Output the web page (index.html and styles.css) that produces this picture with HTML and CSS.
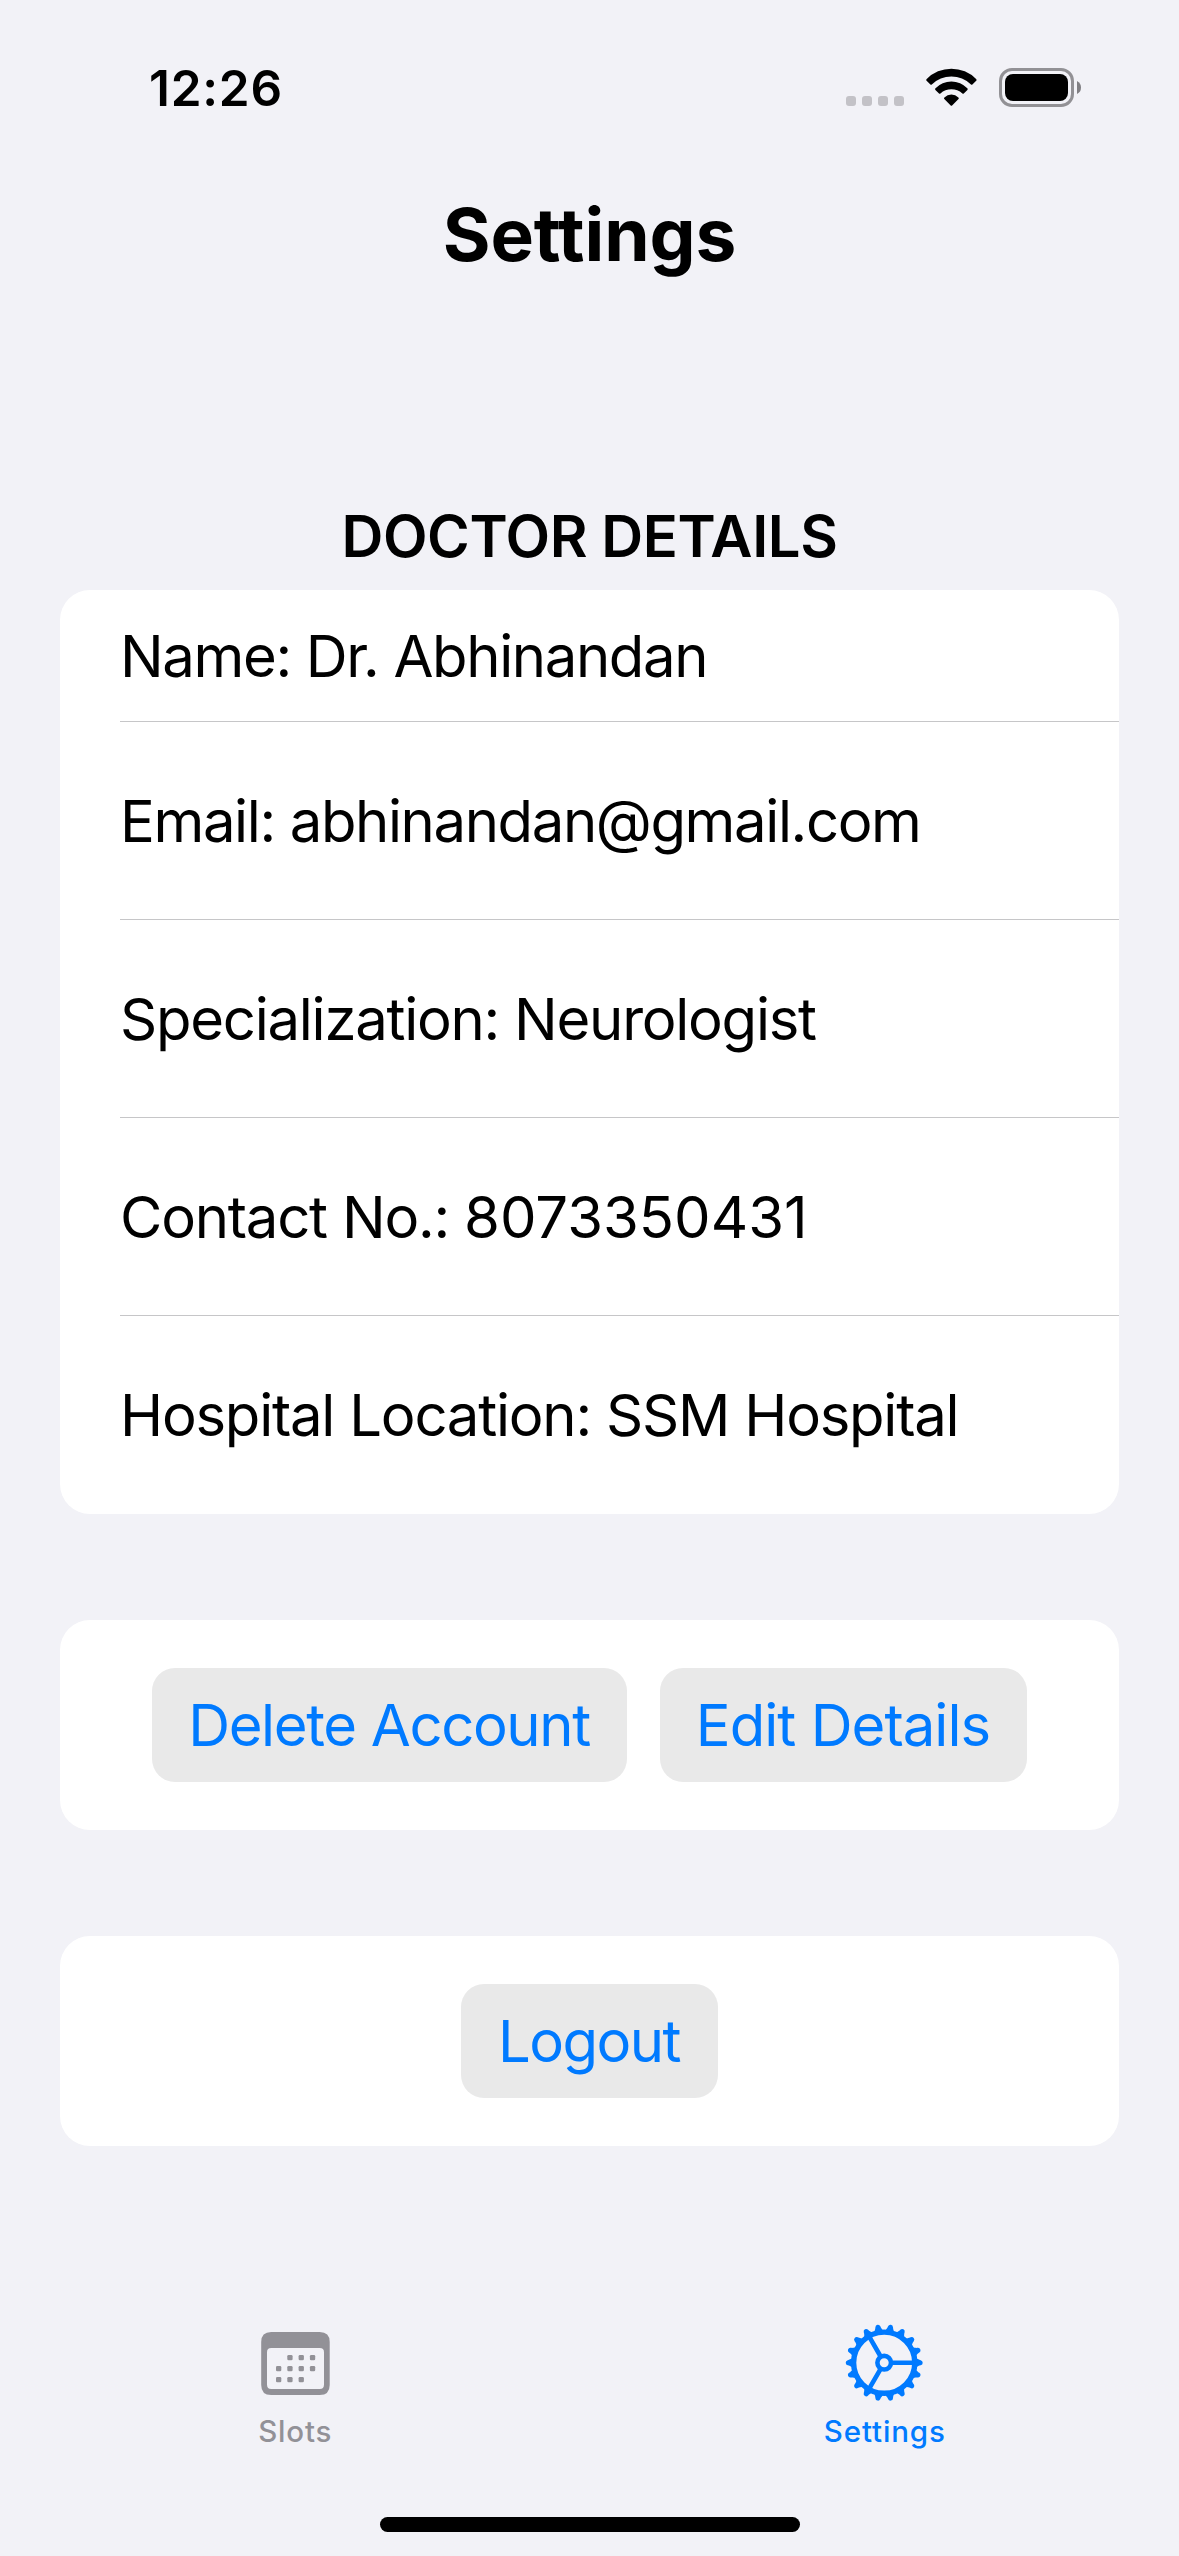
FILE: index.html
```html
<!DOCTYPE html>
<html lang="en">
<head>
<meta charset="utf-8">
<title>Settings</title>
<link rel="stylesheet" href="styles.css">
</head>
<body>
<div class="screen">
  <header class="status-bar">
    <span class="time">12:26</span>
    <div class="status-icons">
      <svg class="signal" width="58" height="40" viewBox="0 0 58 40" fill="#c3c2c7">
        <rect x="0" y="28" width="10" height="10" rx="3"/>
        <rect x="16" y="28" width="10" height="10" rx="3"/>
        <rect x="32" y="28" width="10" height="10" rx="3"/>
        <rect x="48" y="28" width="10" height="10" rx="3"/>
      </svg>
      <svg class="wifi" width="52" height="40" viewBox="0 0 52 40">
        <path d="M.7 11.1A34.4 34.4 0 0 1 50.1 11.1Q51 11.9 50.2 12.8L46.4 16.5Q45.7 17.1 45 16.5A28 28 0 0 0 5.8 16.5Q5.1 17.1 4.4 16.5L.6 12.8Q-.2 11.9 .7 11.1Z"/>
        <path d="M9.5 20.3A21.9 21.9 0 0 1 41.3 20.3Q42.2 21.1 41.4 22L37.8 25.4Q37.1 26 36.4 25.4A16.9 16.9 0 0 0 14.4 25.4Q13.7 26 13 25.4L9.4 22Q8.6 21.1 9.5 20.3Z"/>
        <path d="M18.4 29.4A10.2 10.2 0 0 1 32.4 29.4Q33.3 30.2 32.5 31L26.1 37.4Q25.4 38 24.7 37.4L18.3 31Q17.5 30.2 18.4 29.4Z"/>
      </svg>
      <svg class="battery" width="82" height="40" viewBox="0 0 82 40">
        <rect x="1.5" y="1.5" width="72" height="36" rx="11.5" fill="none" stroke="#929195" stroke-width="3"/>
        <rect x="6" y="6" width="63" height="27" rx="8"/>
        <path d="M78 13Q82 15 82 19.5T78 26Z" fill="#807f83"/>
      </svg>
    </div>
  </header>

  <h1 class="page-title">Settings</h1>

  <main class="content">
    <h2 class="section-title">DOCTOR DETAILS</h2>
    <ul class="card details">
      <li class="detail name">Name: Dr. Abhinandan</li>
      <li class="detail email">Email: abhinandan@gmail.com</li>
      <li class="detail specialization">Specialization: Neurologist</li>
      <li class="detail contact">Contact No.: <span class="digits">8073350431</span></li>
      <li class="detail location">Hospital Location: SSM Hospital</li>
    </ul>
    <div class="card actions">
      <button class="button delete">Delete Account</button>
      <button class="button edit">Edit Details</button>
    </div>
    <div class="card actions">
      <button class="button logout">Logout</button>
    </div>
  </main>

  <nav class="tab-bar">
    <a class="tab slots">
      <svg width="78" height="78" viewBox="0 0 78 78">
        <path fill="currentColor" fill-rule="evenodd" d="M15.200 8H63.700Q73.700 8 73.700 18V61Q73.700 71 63.700 71H15.200Q5.200 71 5.200 61V18Q5.200 8 15.200 8ZM15.200 24Q11 24 11 28.200V60.500Q11 65 15.200 65H63.800Q68 65 68 60.500V28.200Q68 24 63.800 24Z"/>
        <g fill="currentColor">
          <rect x="31.300" y="31" width="5.300" height="5.300" rx="1.300"/><rect x="42.600" y="31" width="5.300" height="5.300" rx="1.300"/><rect x="53.900" y="31" width="5.300" height="5.300" rx="1.300"/>
          <rect x="20" y="42" width="5.300" height="5.300" rx="1.300"/><rect x="31.300" y="42" width="5.300" height="5.300" rx="1.300"/><rect x="42.600" y="42" width="5.300" height="5.300" rx="1.300"/><rect x="53.900" y="42" width="5.300" height="5.300" rx="1.300"/>
          <rect x="20" y="53" width="5.300" height="5.300" rx="1.300"/><rect x="31.300" y="53" width="5.300" height="5.300" rx="1.300"/><rect x="42.600" y="53" width="5.300" height="5.300" rx="1.300"/>
        </g>
      </svg>
      <span class="tab-label">Slots</span>
    </a>
    <a class="tab settings active">
      <svg width="78" height="78" viewBox="-39.200 -38.700 78 78">
        <defs><path id="tooth" d="M31.500 -4.600C34 -3.600 34.500 -2.900 36.500 -2.500Q38.500 -2 38.500 0T36.500 2.500C34.500 2.900 34 3.600 31.500 4.600Z"/></defs>
        <g fill="currentColor">
          <use href="#tooth"/><use href="#tooth" transform="rotate(20)"/><use href="#tooth" transform="rotate(40)"/>
          <use href="#tooth" transform="rotate(60)"/><use href="#tooth" transform="rotate(80)"/><use href="#tooth" transform="rotate(100)"/>
          <use href="#tooth" transform="rotate(120)"/><use href="#tooth" transform="rotate(140)"/><use href="#tooth" transform="rotate(160)"/>
          <use href="#tooth" transform="rotate(180)"/><use href="#tooth" transform="rotate(200)"/><use href="#tooth" transform="rotate(220)"/>
          <use href="#tooth" transform="rotate(240)"/><use href="#tooth" transform="rotate(260)"/><use href="#tooth" transform="rotate(280)"/>
          <use href="#tooth" transform="rotate(300)"/><use href="#tooth" transform="rotate(320)"/><use href="#tooth" transform="rotate(340)"/>
        </g>
        <g fill="none" stroke="currentColor">
          <circle r="30.600" stroke-width="5.400"/>
          <circle r="6.800" stroke-width="4.600"/>
          <path stroke-width="4.600" d="M8 0H30M-4 -6.930L-15 -25.980M-4 6.930L-15 25.980"/>
        </g>
      </svg>
      <span class="tab-label">Settings</span>
    </a>
  </nav>
  <div class="home-indicator"></div>
</div>
</body>
</html>
```
FILE: styles.css
```css
* {
  box-sizing: border-box;
  margin: 0;
  padding: 0;
}

body {
  background: #f2f2f7;
  color: #000;
  font-family: Inter, "Liberation Sans", sans-serif;
}

svg {
  display: block;
}

.screen {
  display: flex;
  flex-direction: column;
  width: 1179px;
  height: 2556px;
}

/* Status bar */
.status-bar {
  display: flex;
  align-items: center;
  justify-content: space-between;
  height: 176px;
  padding: 0 98px 0 149px;
}

.time {
  font-size: 49.5px;
  font-weight: 600;
  line-height: 60px;
  letter-spacing: 0.75px;
}

.status-icons {
  display: flex;
  align-items: center;
}

.wifi {
  margin: 0 21px 0 22px;
}

/* Title */
.page-title {
  margin-top: 14px;
  font-size: 73px;
  font-weight: 700;
  line-height: 90px;
  letter-spacing: -0.1px;
  text-align: center;
}

/* Content */
.content {
  display: flex;
  flex-direction: column;
  padding: 220px 60px 0;
}

.section-title {
  margin-bottom: 18px;
  font-size: 58px;
  font-weight: 600;
  line-height: 72px;
  letter-spacing: -0.4px;
  text-align: center;
}

.card {
  border-radius: 30px;
  background: #fff;
}

.details {
  padding-left: 60px;
  list-style: none;
}

.detail {
  height: 198px;
  border-bottom: 1px solid #c6c6c8;
  font-size: 58px;
  line-height: 198px;
  white-space: nowrap;
}

.detail:last-child {
  border-bottom: 0;
}

.detail.name {
  height: 132px;
  line-height: 132px;
  letter-spacing: -1.36px;
}

.email {
  letter-spacing: -1.38px;
}

.specialization {
  letter-spacing: -1.25px;
}

.contact {
  letter-spacing: -1.22px;
}

.digits {
  letter-spacing: 0;
}

.location {
  letter-spacing: -1.22px;
}

.actions {
  display: flex;
  align-items: center;
  justify-content: center;
  gap: 33px;
  height: 210px;
  margin-top: 106px;
}

.button {
  height: 114px;
  padding-right: 1px;
  border: 0;
  border-radius: 23px;
  background: #e9e9e9;
  color: #007aff;
  font-family: inherit;
  font-size: 58px;
  text-align: center;
  white-space: nowrap;
}

.delete {
  width: 475px;
  letter-spacing: -1.36px;
}

.edit {
  width: 367px;
  letter-spacing: -0.96px;
}

.logout {
  width: 257px;
  letter-spacing: -1.52px;
}

/* Tab bar */
.tab-bar {
  display: flex;
  margin-top: 178px;
}

.tab {
  display: flex;
  flex: 1;
  flex-direction: column;
  align-items: center;
  gap: 11px;
  color: #929197;
}

.tab.active {
  color: #007aff;
}

.tab-label {
  padding-left: 1px;
  font-size: 29.5px;
  font-weight: 500;
  line-height: 36px;
  letter-spacing: 0.85px;
}

.home-indicator {
  width: 420px;
  height: 15px;
  margin: auto auto 24px;
  border-radius: 8px;
  background: #000;
}
```
